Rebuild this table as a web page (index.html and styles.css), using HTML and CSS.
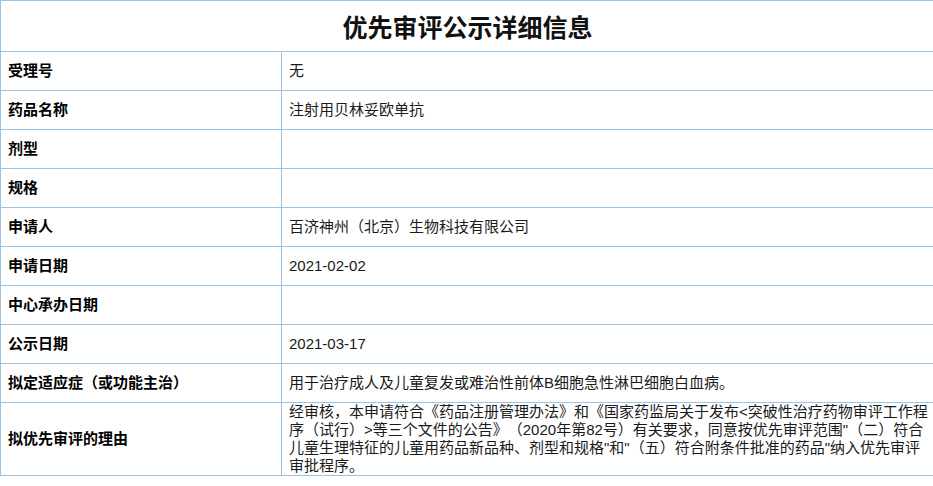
FILE: index.html
```html
<!DOCTYPE html>
<html lang="zh-CN">
<head>
<meta charset="utf-8">
<title>优先审评公示详细信息</title>
<link rel="stylesheet" href="styles.css">
</head>
<body>
<table class="detail">
  <colgroup>
    <col class="col-label">
    <col class="col-value">
  </colgroup>
  <thead>
    <tr><th colspan="2" class="title">优先审评公示详细信息</th></tr>
  </thead>
  <tbody>
    <tr><td class="label">受理号</td><td class="value">无</td></tr>
    <tr><td class="label">药品名称</td><td class="value">注射用贝林妥欧单抗</td></tr>
    <tr><td class="label">剂型</td><td class="value"></td></tr>
    <tr><td class="label">规格</td><td class="value"></td></tr>
    <tr><td class="label">申请人</td><td class="value">百济神州（北京）生物科技有限公司</td></tr>
    <tr><td class="label">申请日期</td><td class="value">2021-02-02</td></tr>
    <tr><td class="label">中心承办日期</td><td class="value"></td></tr>
    <tr><td class="label">公示日期</td><td class="value">2021-03-17</td></tr>
    <tr><td class="label">拟定适应症（或功能主治）</td><td class="value">用于治疗成人及儿童复发或难治性前体B细胞急性淋巴细胞白血病。</td></tr>
    <tr class="tall"><td class="label">拟优先审评的理由</td><td class="value multi">经审核，本申请符合《药品注册管理办法》和《国家药监局关于发布&lt;突破性治疗药物审评工作程序（试行）&gt;等三个文件的公告》（2020年第82号）有关要求，同意按优先审评范围"（二）符合儿童生理特征的儿童用药品新品种、剂型和规格"和"（五）符合附条件批准的药品"纳入优先审评审批程序。</td></tr>
  </tbody>
</table>
</body>
</html>
```

FILE: styles.css
```css
html, body {
  margin: 0;
  padding: 0;
  overflow: hidden;
  background: #ffffff;
}

body {
  font-family: "Liberation Sans", "Noto Sans CJK SC", sans-serif;
  font-size: 15px;
  color: #111111;
  text-spacing-trim: space-all;
}

.detail {
  border-collapse: collapse;
  table-layout: fixed;
  width: 935px;
}

.col-label { width: 281px; }

.detail th,
.detail td {
  border: 1px solid #9cc3e5;
  vertical-align: middle;
  padding: 0 7px;
}

.title {
  height: 50px;
  font-family: "Noto Sans CJK SC", sans-serif;
  font-size: 25px;
  font-weight: 700;
  color: #111111;
  text-align: center;
  padding: 0;
}

.detail tbody td {
  height: 38px;
  line-height: 18px;
}

.label {
  font-weight: 700;
  color: #000000;
  text-align: left;
}

.detail .value {
  color: #1a1a1a;
  padding-right: 3px;
}

.tall td {
  height: 80px;
}

.multi {
  line-height: 15.7px;
  word-break: break-all;
}
```
